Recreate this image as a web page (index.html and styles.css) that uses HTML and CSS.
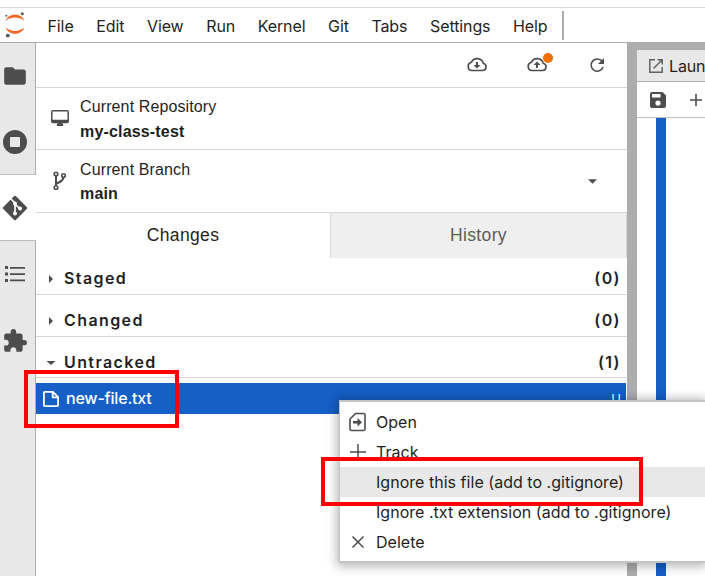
FILE: index.html
```html
<!DOCTYPE html>
<html lang="en">
<head>
<meta charset="utf-8">
<title>JupyterLab</title>
<link rel="stylesheet" href="styles.css">
</head>
<body>
<div class="app">
  <header class="menubar">
    <svg class="logo" width="20" height="28" viewBox="0 0 20 28"><g fill="#f26522"><path d="M.8 9.700C3.200 1.800 16.800 1.800 19.200 9.700C14.500 5.400 5.500 5.400.8 9.700Z"/><path d="M.8 16.500C3.200 24.800 16.800 24.800 19.200 16.500C14.500 21 5.500 21 .8 16.500Z"/></g><g fill="#555"><circle cx="1.300" cy="4.800" r="1"/><circle cx="17.300" cy="2.700" r="1.500"/><circle cx="2.800" cy="24.600" r="1.900"/></g></svg>
    <nav class="menus"><span>File</span><span>Edit</span><span>View</span><span>Run</span><span>Kernel</span><span>Git</span><span>Tabs</span><span>Settings</span><span>Help</span></nav>
    <i class="menu-end"></i>
  </header>
  <div class="body">
    <aside class="rail">
      <div class="rail-item"><svg width="26" height="26" viewBox="0 0 24 24"><path d="M10 4H4c-1.100 0-2 .9-2 2v12c0 1.100.9 2 2 2h16c1.100 0 2-.9 2-2V8c0-1.100-.9-2-2-2h-8z"/></svg></div>
      <div class="rail-item"><svg width="24" height="24" viewBox="0 0 24 24"><path fill-rule="evenodd" d="M12 0a12 12 0 1 0 0 24a12 12 0 1 0 0-24zM8 7h8q1 0 1 1v8q0 1-1 1H8q-1 0-1-1V8q0-1 1-1z"/></svg></div>
      <div class="rail-item active"><svg width="26" height="26" viewBox="0 0 26 26"><path d="M11.900 1.300q1.100-1 2.200 0l10.600 10.600q1.100 1.100 0 2.200L14.100 24.700q-1.100 1-2.200 0L1.300 14.100q-1.100-1.100 0-2.200z"/><path d="M8.500 3.500 13 8v11M13 9l5 5" fill="none" stroke="#fff" stroke-width="1.700"/><g fill="#fff"><circle cx="13" cy="8.500" r="2"/><circle cx="13" cy="18.500" r="2"/><circle cx="18" cy="13.500" r="2"/></g></svg></div>
      <div class="rail-item"><svg width="20" height="18" viewBox="0 0 20 18"><path d="M0 1h3v3H0zM5 2h15v1.700H5zM0 7.500h3v3H0zM5 8.200h15v1.700H5zM0 14h3v3H0zM5 14.600h15v1.700H5z"/></svg></div>
      <div class="rail-item"><svg width="26" height="26" viewBox="0 0 24 24"><path d="M20.500 11H19V7c0-1.100-.9-2-2-2h-4V3.500a2.500 2.500 0 0 0-5 0V5H4c-1.100 0-2 .9-2 2v3.800h1.500a2.700 2.700 0 0 1 0 5.400H2V20c0 1.100.9 2 2 2h3.800v-1.500a2.700 2.700 0 0 1 5.400 0V22H17c1.100 0 2-.9 2-2v-4h1.500a2.500 2.500 0 0 0 0-5z"/></svg></div>
    </aside>
    <section class="git">
      <div class="git-tools">
        <svg width="22" height="16" viewBox="0 0 22 16"><path class="line" d="M5.500 13.500h11a3.700 3.700 0 0 0 .7-7.300A6.300 6.300 0 0 0 5.400 5.300a4.200 4.200 0 0 0 .1 8.200z"/><path d="M10 5h2v3h2.500L11 11.500 7.500 8H10z"/></svg>
        <span class="push"><svg width="22" height="16" viewBox="0 0 22 16"><path class="line" d="M5.500 13.500h11a3.700 3.700 0 0 0 .7-7.300A6.300 6.300 0 0 0 5.400 5.300a4.200 4.200 0 0 0 .1 8.200z"/><path d="M10 11h2V8h2.500L11 4.500 7.500 8H10z"/></svg><i class="badge"></i></span>
        <svg width="16" height="16" viewBox="0 0 16 16"><path class="line" d="M13 4.300A6.100 6.100 0 1 0 14 10"/><path d="M15 1v6H9z"/></svg>
      </div>
      <div class="info repo">
        <svg width="18" height="17" viewBox="0 0 19 18"><path fill-rule="evenodd" d="M2 0h15q2 0 2 2v10q0 2-2 2h-5l1 2v1H6v-1l1-2H2q-2 0-2-2V2q0-2 2-2zM1.600 1.600v8.800h15.800V1.600z"/></svg>
        <div><p>Current Repository</p><b>my-class-test</b></div>
      </div>
      <div class="info branch">
        <svg width="20" height="20" viewBox="0 0 20 20"><g class="line"><circle cx="5" cy="3" r="1.800"/><circle cx="5" cy="16.500" r="1.800"/><circle cx="12.500" cy="4.500" r="1.800"/></g><path class="branch-line" d="M5 5v9.500M5.200 13.500c0-2.500 6.500-1.500 7.200-7"/></svg>
        <div><p>Current Branch</p><b>main</b></div>
        <svg class="caret" width="9" height="5" viewBox="0 0 9 5"><path d="M0 .3h9L4.500 4.800z"/></svg>
      </div>
      <div class="tabs"><div class="tab">Changes</div><div class="tab off">History</div></div>
      <div class="group"><svg width="10" height="10" viewBox="0 0 10 10"><path d="M3 1l4 4-4 4z"/></svg><span>Staged</span><em>(0)</em></div>
      <div class="group"><svg width="10" height="10" viewBox="0 0 10 10"><path d="M3 1l4 4-4 4z"/></svg><span>Changed</span><em>(0)</em></div>
      <div class="group last"><svg width="10" height="10" viewBox="0 0 10 10"><path d="M.5 3h9L5 7z"/></svg><span>Untracked</span><em>(1)</em></div>
      <div class="file"><svg width="16" height="16" viewBox="0 0 16 16"><path d="M1.800.9h8.100l5.200 5.200v8.100q0 .9-.9.900H1.800q-.9 0-.9-.9V1.800q0-.9.900-.9zM9.700 1v5.300H15"/></svg><span>new-file.txt</span><em>U</em></div>
    </section>
    <main class="dock">
      <div class="dock-tab"><svg width="14" height="14" viewBox="0 0 14 14"><path d="M6 .8H.8v12.400h12.400V8M8.500.8h4.700v4.700M13 1 4.500 9.500"/></svg><span>Laun</span></div>
      <div class="dock-tools"><svg width="16" height="16" viewBox="0 0 16 16"><path fill-rule="evenodd" d="M2 0h10.500L16 3.500V14q0 2-2 2H2q-2 0-2-2V2q0-2 2-2zM2 2v3.500h8.500V2zM8 8.500a2.600 2.600 0 1 0 0 5.200a2.600 2.600 0 1 0 0-5.200z"/></svg><svg width="12" height="12" viewBox="0 0 12 12"><path d="M5.200 0h1.600v5.200H12v1.600H6.800V12H5.200V6.800H0V5.200h5.200z"/></svg></div>
      <div class="cell"></div>
    </main>
  </div>
</div>
<div class="context">
  <div class="choice"><svg width="18" height="20" viewBox="0 0 18 20"><path class="line" d="M6.500 1.500h8q1.500 0 1.500 1.500v14q0 1.500-1.500 1.500h-12Q1 18.500 1 17V7z"/><path d="M4 9h4.500V6L13 10.300l-4.500 4.200v-3H4z"/></svg><span>Open</span></div>
  <div class="choice"><svg width="18" height="18" viewBox="0 0 18 18"><path class="thin" d="M9 1v16M1 9h16"/></svg><span>Track</span></div>
  <div class="choice hot"><i></i><span>Ignore this file (add to .gitignore)</span></div>
  <div class="choice"><i></i><span>Ignore .txt extension (add to .gitignore)</span></div>
  <div class="choice"><svg width="18" height="18" viewBox="0 0 18 18"><path class="thin" d="M3.500 3.500l11 11M14.500 3.500l-11 11"/></svg><span>Delete</span></div>
</div>
<div class="mark mark-file"></div>
<div class="mark mark-ignore"></div>
</body>
</html>
```
FILE: styles.css
```css
* { box-sizing: border-box; }
body { margin: 0; width: 705px; height: 576px; overflow: hidden; position: relative; background: #fff; color: #1f1f1f; font: 16px/20px Inter, sans-serif; }
p { margin: 0; }
svg { display: block; flex: none; fill: #4d4d4d; }
em { font-style: normal; }
.line { fill: none; stroke: #4d4d4d; stroke-width: 1.6; }
.thin { fill: none; stroke: #4d4d4d; stroke-width: 1.5; }
.app { height: 576px; padding-top: 7px; display: flex; flex-direction: column; }
.menubar { height: 36px; flex: none; border-top: 1px solid #dcdcdc; border-bottom: 1px solid #adadad; display: flex; align-items: center; padding-left: 5px; }
.menus { display: flex; margin-left: 22.5px; gap: 22.6px; font-size: 16px; padding-top: 2px; letter-spacing: -.1px; }
.menu-end { width: 2px; height: 29px; background: #adadad; margin-left: 14px; }
.body { flex: 1; display: flex; min-height: 0; }
.rail { width: 36px; background: #e8e8e8; flex: none; }
.rail-item { height: 66px; border-right: 1px solid #adadad; display: flex; align-items: center; padding-left: 2px; }
.rail-item:nth-child(2) { padding-left: 3px; }
.rail-item:nth-child(4) { padding-left: 5px; }
.rail-item.active { height: 67px; margin-top: -1px; background: #fff; border-top: 1px solid #bdbdbd; border-bottom: 1px solid #bdbdbd; border-right: 0; padding-left: 2px; }
.rail-item:last-child { height: 269px; align-items: flex-start; padding-top: 21px; }
.git { width: 591px; flex: none; background: #fff; }
.git-tools { height: 45px; border-bottom: 1px solid #d6d6d6; display: flex; align-items: center; justify-content: flex-end; gap: 38px; padding-right: 22px; }
.git-tools > svg:last-child { margin-left: 3px; }
.push { position: relative; }
.badge { position: absolute; width: 10px; height: 10px; border-radius: 50%; background: #f37000; right: -5px; top: -4px; }
.info { display: flex; align-items: center; border-bottom: 1px solid #d6d6d6; font: 16px/25px "Liberation Sans", sans-serif; letter-spacing: .12px; }
.repo { height: 62px; padding-left: 15px; }
.repo > div { margin-left: 11px; }
.branch { height: 63px; padding-left: 15px; }
.branch > div { margin-left: 9px; padding-top: 2px; }
.info p, .info b { display: block; line-height: 25px; }
.info b { letter-spacing: .17px; }
.branch p, .branch b { line-height: 24px; }
.branch-line { fill: none; stroke: #4d4d4d; stroke-width: 2; }
.caret { margin-left: auto; margin-right: 30px; }
.tabs { display: flex; height: 45px; font: 17.5px/45px "Liberation Sans", sans-serif; letter-spacing: .35px; text-align: center; }
.tab { width: 294px; }
.tab.off { width: 297px; background: #efefef; color: #5c5c5c; border-left: 1px solid #d9d9d9; border-right: 1px solid #d9d9d9; }
.group { height: 42px; border-bottom: 1px solid #d6d6d6; display: flex; align-items: center; padding: 8px 6px 0 10px; font-weight: 600; letter-spacing: 1.4px; }
.group svg { margin-top: 2px; }
.group:nth-child(5) { height: 37px; padding-top: 3px; }
.group.last { height: 41px; padding-top: 9px; }
.group span { margin-left: 8px; }
.group em { margin-left: auto; }
.file { margin: 5px 1px 0 0; height: 31px; background: #165fc7; color: #fff; display: flex; align-items: center; padding: 0 5px 0 7px; }
.file svg { fill: none; stroke: #fff; stroke-width: 1.8; }
.file span { margin: -2px 0 0 7px; font-weight: 500; letter-spacing: -.2px; }
.file em { margin-left: auto; font-size: 13px; }
.dock { flex: 1; border-left: 10px solid #adadad; border-top: 7px solid #adadad; min-width: 0; overflow: hidden; }
.dock-tab { height: 32px; background: #e8e8e8; border-bottom: 1px solid #adadad; display: flex; align-items: center; padding-left: 12px; }
.dock-tab svg { fill: none; stroke: #616161; stroke-width: 1.5; }
.dock-tab span { margin-left: 6px; letter-spacing: -.15px; }
.dock-tools { height: 36px; border-bottom: 1px solid #bdbdbd; display: flex; align-items: center; padding-left: 13px; gap: 24px; }
.cell { height: 458px; margin-left: 19px; border-left: 10px solid #165fc7; }
.context { position: absolute; left: 339px; top: 400px; width: 366px; height: 163px; padding: 5px 0; background: #fff; border: 1px solid #c4c4c4; border-right: 0; border-top-width: 2px; border-bottom-width: 2px; box-shadow: 0 1px 10px 2px rgba(0,0,0,.3); }
.choice { height: 30px; display: flex; align-items: center; padding-left: 9px; letter-spacing: .03px; }
.choice svg, .choice i { width: 18px; margin-right: 9px; }
.choice.hot { background: #e8e8e8; }
.mark { position: absolute; border: 4px solid #f00; }
.mark-file { left: 24px; top: 370px; width: 155px; height: 58px; }
.mark-ignore { left: 321px; top: 457px; width: 322px; height: 49px; }
```
